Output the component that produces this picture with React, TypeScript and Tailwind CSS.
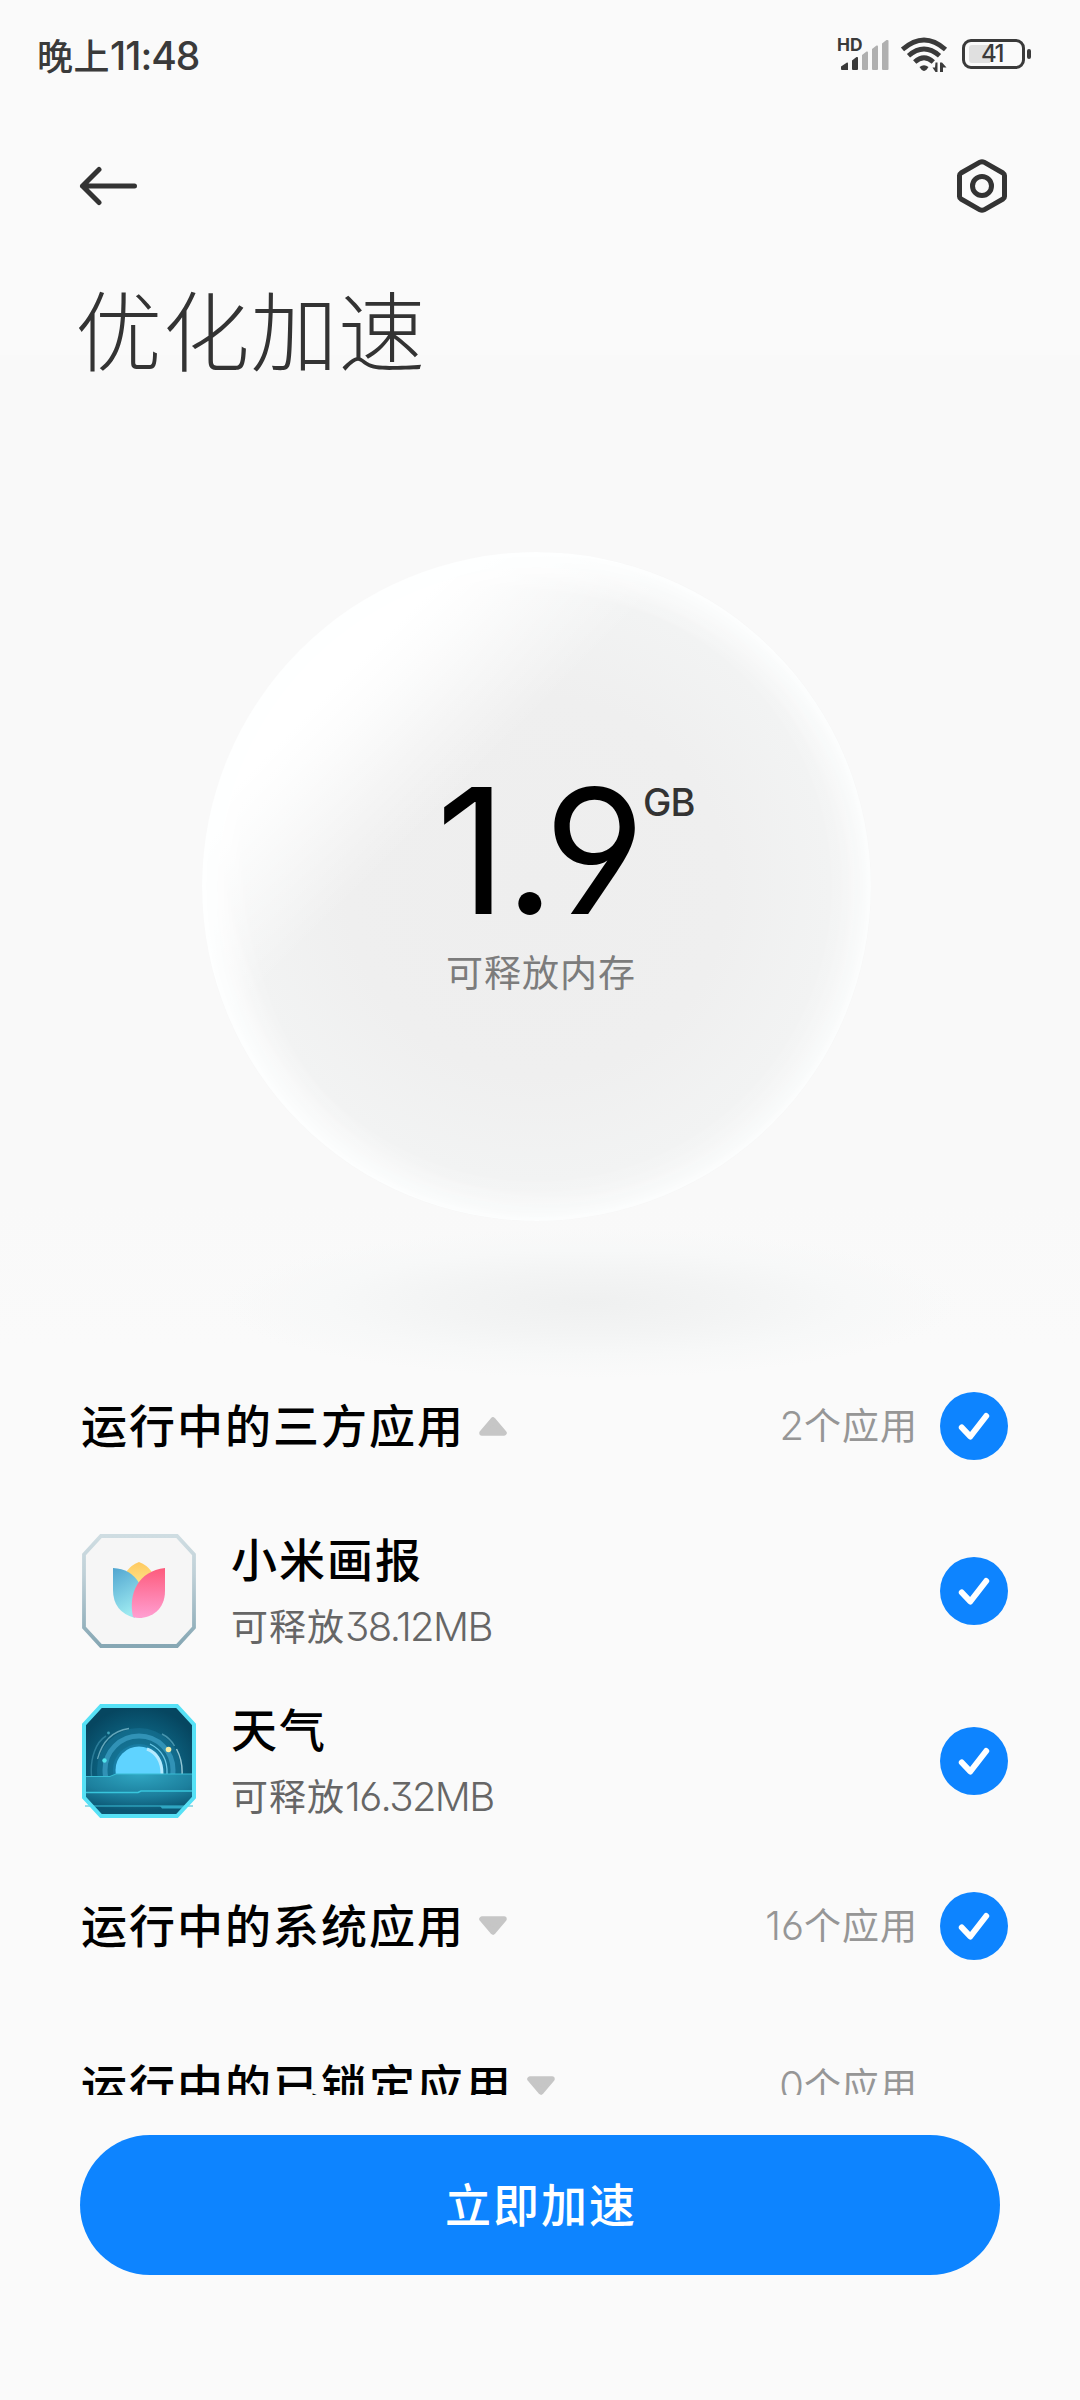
import { useState } from "react";

const fontCls = "font-[Inter,'Noto_Sans_CJK_SC',sans-serif] [font-feature-settings:'cv03','cv04','cv09']";

type RunningApp = { name: string; size: string; icon: "gallery" | "weather" };
type Group = { title: string; count: number; checkable: boolean; apps: RunningApp[] };

const groups: Group[] = [
  {
    title: "运行中的三方应用",
    count: 2,
    checkable: true,
    apps: [
      { name: "小米画报", size: "38.12MB", icon: "gallery" },
      { name: "天气", size: "16.32MB", icon: "weather" },
    ],
  },
  { title: "运行中的系统应用", count: 16, checkable: true, apps: [] },
  { title: "运行中的已锁定应用", count: 0, checkable: false, apps: [] },
];

function SignalIcon() {
  return (
    <svg className="w-[52px] h-9 overflow-visible" viewBox="0 0 52 36">
      <text x="-1" y="14.500" fontSize="17" fontWeight="700" fill="#3a3a3a" fontFamily="Inter, sans-serif" textLength="25.500" lengthAdjust="spacingAndGlyphs">HD</text>
      <path d="M3 30.5L9 26.5Q10 26.200 10 27.500V34H4Q3 34 3 33Z" fill="#3a3a3a" />
      <path d="M14 24.500L18.500 21Q20 20.500 20 22V33Q20 34 19 34H15Q14 34 14 33Z" fill="#3a3a3a" />
      <path d="M24 19L28.500 15.500Q30 15 30 16.500V33Q30 34 29 34H25Q24 34 24 33Z" fill="#b0b0b0" />
      <path d="M34 13L38.500 9.500Q40 9 40 10.500V33Q40 34 39 34H35Q34 34 34 33Z" fill="#b0b0b0" />
      <path d="M44 7.500L48.500 4Q50.500 3.500 50.500 5V33Q50.500 34 49.500 34H45Q44 34 44 33Z" fill="#b0b0b0" />
    </svg>
  );
}

function WifiIcon() {
  return (
    <svg className="w-[47px] h-9" viewBox="0 0 47 36" fill="none" stroke="#3a3a3a" strokeWidth="4.800">
      <path d="M1.500 13.500Q23 -5.500 44.500 13.500" />
      <path d="M7.500 19.700Q23 6.300 38.500 19.700" />
      <path d="M13.700 26Q23 17.500 32.300 26" />
      <path d="M18.500 31Q23 27.300 27.500 31L25.500 33.800Q23 36 20.500 33.800Z" fill="#3a3a3a" stroke="none" />
      <path d="M36.500 26.500V36H34.500L31.500 31.500H34L34.500 26.500ZM39 26.500H41L45.500 31.500H42V36H39Z" fill="#3a3a3a" stroke="none" />
    </svg>
  );
}

function Battery({ level }: { level: number }) {
  return (
    <div className="flex items-center gap-[2px]">
      <div className="relative w-[63px] h-[30px] rounded-[9px] border-[3px] border-[#3a3a3a] p-[3px] pl-1">
        <div className="h-[18px] rounded-l-[3px] bg-[#e0e0e0]" style={{ width: `${level}%` }} />
        <span className="absolute inset-0 flex items-center justify-center pr-[3px] text-[24px] leading-none font-medium tracking-[-1.5px] text-[#3a3a3a]">{level}</span>
      </div>
      <div className="w-1 h-[10px] rounded-[2px] bg-[#3a3a3a]" />
    </div>
  );
}

function StatusBar() {
  return (
    <div className="flex items-center justify-between h-[108px] pl-[37px] pr-[49px]">
      <span className="pt-[2px] text-[36px] leading-none font-medium tracking-[0.5px] text-[#3a3a3a]">
        晚上<span className="text-[39px] tracking-[-1px]">11:48</span>
      </span>
      <div className="flex items-center">
        <SignalIcon />
        <div className="ml-[11px]"><WifiIcon /></div>
        <div className="ml-[14px]"><Battery level={41} /></div>
      </div>
    </div>
  );
}

function GalleryIcon() {
  return (
    <svg className="w-[114px] h-[114px]" viewBox="0 0 114 114">
      <defs>
        <linearGradient id="frame" x1="0" y1="0" x2="0" y2="1">
          <stop offset="0" stopColor="#cfdde2" />
          <stop offset="0.350" stopColor="#bfd0d7" />
          <stop offset="1" stopColor="#86a7b4" />
        </linearGradient>
        <linearGradient id="petalBlue" x1="0" y1="0" x2="0.300" y2="1">
          <stop offset="0" stopColor="#51a5d0" />
          <stop offset="1" stopColor="#9ce9f0" />
        </linearGradient>
        <linearGradient id="petalPink" x1="0" y1="0" x2="0" y2="1">
          <stop offset="0" stopColor="#fd5b7c" />
          <stop offset="1" stopColor="#ff9fd2" />
        </linearGradient>
        <linearGradient id="petalGold" x1="0" y1="0" x2="0" y2="1">
          <stop offset="0" stopColor="#ffc95f" />
          <stop offset="1" stopColor="#fde58c" />
        </linearGradient>
      </defs>
      <path d="M19 2H95L112 20.500V93.500L95 112H19L2 93.500V20.500Z" fill="#f6f6f6" stroke="url(#frame)" strokeWidth="3.800" />
      <path d="M57 28Q65 31 69.500 37.500L57 52L44.500 37.500Q49 31 57 28Z" fill="url(#petalGold)" />
      <path d="M31 34Q49 35 57 49L53 84Q31 78 31 56Z" fill="url(#petalBlue)" />
      <path d="M83 34V57C83 75 70 84 57 84Q54 84 51 83C46 60 56 37 83 34Z" fill="url(#petalPink)" />
    </svg>
  );
}

function WeatherIcon() {
  return (
    <svg className="w-[114px] h-[114px]" viewBox="0 0 114 114">
      <defs>
        <radialGradient id="sky" cx="0.500" cy="0.600" r="0.600">
          <stop offset="0" stopColor="#1287a8" />
          <stop offset="0.550" stopColor="#0c6280" />
          <stop offset="1" stopColor="#064660" />
        </radialGradient>
        <radialGradient id="sea" cx="0.500" cy="0" r="0.900">
          <stop offset="0" stopColor="#2fa6c2" />
          <stop offset="0.600" stopColor="#1c7f9d" />
          <stop offset="1" stopColor="#0b5673" />
        </radialGradient>
        <clipPath id="horizon">
          <rect width="114" height="72" />
        </clipPath>
      </defs>
      <path d="M19 2H95L112 20.500V93.500L95 112H19L2 93.500V20.500Z" fill="url(#sky)" />
      <g clipPath="url(#horizon)" fill="none">
        <circle cx="57" cy="66" r="42" fill="#1a7b9e" opacity="0.450" />
        <circle cx="57" cy="66" r="34" stroke="#3192b6" strokeWidth="5" />
        <circle cx="57" cy="66" r="26" fill="#187da3" />
        <circle cx="57" cy="66" r="23.500" fill="#5fd3ff" />
        <path d="M65 45Q80 51 80 70" stroke="#b5ebff" strokeWidth="3" />
        <path d="M68 40Q86 49 85 70" stroke="#6bc8e7" strokeWidth="1.300" />
        <path d="M9.500 72C8 54 14 38 24 32" stroke="#2b7c98" strokeWidth="1.500" />
        <path d="M15.500 55C20 38 30 27 47 24.500" stroke="#64a6ba" strokeWidth="1.300" />
        <path d="M80 30Q88 34 92.500 42" stroke="#4795ae" strokeWidth="1.500" />
        <path d="M94.500 45Q101 57 100 72" stroke="#91c6d4" strokeWidth="1.500" />
      </g>
      <path d="M3 73H28L34 70H111V93L94.500 111H19.500L3 93Z" fill="url(#sea)" />
      <path d="M3 88.500H56L59 87H111" fill="none" stroke="#38c5dc" strokeWidth="1.500" />
      <path d="M3 72.500H28L34 70H111M3 102H111" fill="none" stroke="#38bcd4" strokeWidth="1.200" />
      <path d="M78 102H102L100 104.500H80Z" fill="#2fa6c2" />
      <circle cx="86.500" cy="45.500" r="2.800" fill="#f5eca4" />
      <circle cx="22.500" cy="56.500" r="2.200" fill="#52e5ec" />
      <circle cx="26.500" cy="29" r="1.400" fill="#3fa2b8" />
      <path d="M19 2H95L112 20.500V93.500L95 112H19L2 93.500V20.500Z" fill="none" stroke="#56e1f6" strokeWidth="4" />
    </svg>
  );
}

function CheckBadge({ checked, onToggle }: { checked: boolean; onToggle: () => void }) {
  return (
    <button type="button" onClick={onToggle} className={`w-[68px] h-[68px] shrink-0 rounded-full ${checked ? "bg-[#0d84ff]" : "bg-[#e6e6e6]"}`}>
      <svg className="w-[68px] h-[68px]" viewBox="0 0 68 68" fill="none" stroke="#fff" strokeWidth="6" strokeLinecap="round" strokeLinejoin="round">
        <path d="M21.800 35.500L30.300 44.500L46.200 24" />
      </svg>
    </button>
  );
}

function Caret({ up }: { up: boolean }) {
  return (
    <svg className={`w-7 h-[19px] ${up ? "" : "-mt-[2px] rotate-180"}`} viewBox="0 0 28 19">
      <path d="M14 3L25 16H3Z" fill="#c6c6c6" stroke="#c6c6c6" strokeWidth="5.500" strokeLinejoin="round" />
    </svg>
  );
}

function GroupRow({ group, open, onOpen }: { group: Group; open: boolean; onOpen: () => void }) {
  const [checked, setChecked] = useState(true);

  return (
    <div className="flex items-center h-[160px] pl-[81px] pr-[72px]">
      <button type="button" onClick={onOpen} className="flex items-center gap-[14px]">
        <span className="text-[46px] leading-[68px] font-medium tracking-[2px] text-black">{group.title}</span>
        <Caret up={open} />
      </button>
      <span className={`ml-auto pt-px text-[37px] leading-[56px] tracking-[1px] text-[#969696] ${group.checkable ? "mr-[22px]" : "mr-[90px]"}`}>
        <span className="text-[40px] font-[350] tracking-[0px]">{group.count}</span>个应用
      </span>
      {group.checkable && <CheckBadge checked={checked} onToggle={() => setChecked(!checked)} />}
    </div>
  );
}

function AppRow({ app }: { app: RunningApp }) {
  const [checked, setChecked] = useState(true);

  return (
    <div className="flex items-center h-[170px] pl-[82px] pr-[72px]">
      {app.icon === "gallery" ? <GalleryIcon /> : <WeatherIcon />}
      <div className="flex-1 ml-[35px] pt-[5px]">
        <div className="text-[46px] leading-[66px] font-medium tracking-[2px] text-black">{app.name}</div>
        <div className="text-[37px] leading-[67px] tracking-[1px] text-[#666]">
          可释放<span className="text-[40px] font-[350] tracking-[-1.6px]">{app.size}</span>
        </div>
      </div>
      <CheckBadge checked={checked} onToggle={() => setChecked(!checked)} />
    </div>
  );
}

function MemoryOrb() {
  return (
    <div className="relative h-[946px] bg-[linear-gradient(#f9f9f9_85%,#fafafa)] pt-[152px]">
      <div className="absolute left-[220px] top-[828px] w-[740px] h-[150px] rounded-[50%] bg-[radial-gradient(closest-side,#eff0f0,#f3f4f4_40%,#f7f8f8_70%,#f9f9f900)]" />
      <div className="relative ml-[202px] w-[669px] h-[669px] rounded-full bg-[linear-gradient(135deg,#ffffff_20%,#ffffffcc_24%,#ffffff00_37%),radial-gradient(circle_at_50%_50%,#eeeeee_0%,#efefef_40%,#f2f3f3_62%,#f8f9f9_80%)] shadow-[inset_0_0_50px_4px_#fdffff,inset_14px_10px_50px_#ffffff,inset_0_0_10px_#ffffff] pt-[209px]">
        <div className="flex ml-[234px] h-[185px]">
          <span className="w-[207px] text-[174px] leading-[180px] font-[430] tracking-[-2px] text-black">1.9</span>
          <span className="mt-[13px] text-[38px] leading-[56px] font-[450] tracking-[-0.8px] text-[#333]">GB</span>
        </div>
        <div className="ml-[244px] text-[37px] leading-[56px] tracking-[1px] text-[#7c7c7c]">可释放内存</div>
      </div>
    </div>
  );
}

export default function App() {
  const [openTitle, setOpenTitle] = useState<string | null>("运行中的三方应用");

  return (
    <div lang="zh-CN" className={`flex flex-col w-[1080px] h-[2400px] overflow-hidden bg-[#fafafa] ${fontCls}`}>
      <div className="h-[400px] shrink-0 bg-[linear-gradient(#fafafa_355px,#f9f9f9_355px)]">
        <StatusBar />
        <div className="flex items-center justify-between h-[156px] pl-[79px] pr-[71px]">
          <svg className="w-[59px] h-10" viewBox="0 0 59 40" fill="none" stroke="#333" strokeWidth="5" strokeLinecap="round" strokeLinejoin="round">
            <path d="M55.500 20H3.500M20 3.500L3.500 20L20 36.500" />
          </svg>
          <svg className="w-[54px] h-[54px]" viewBox="0 0 54 54" fill="none" stroke="#333" strokeWidth="5" strokeLinejoin="round">
            <path d="M27 2.700Q28 2.700 29 3.200L48 14Q49.500 15 49.500 16.500V37.500Q49.500 39 48 40L29 50.800Q27 51.800 25 50.800L6 40Q4.500 39 4.500 37.500V16.500Q4.500 15 6 14L25 3.200Q26 2.700 27 2.700Z" />
            <circle cx="27" cy="27" r="9.500" />
          </svg>
        </div>
        <h1 className="ml-[75px] pt-1 text-[87px] leading-[132px] font-light tracking-[0.7px] text-[#333]">优化加速</h1>
      </div>

      <div className="shrink-0">
        <MemoryOrb />
      </div>

      <div className="h-[749px] shrink-0 overflow-hidden">
        {groups.map((g) => (
          <div key={g.title}>
            <GroupRow group={g} open={openTitle === g.title} onOpen={() => setOpenTitle(openTitle === g.title ? null : g.title)} />
            {openTitle === g.title && g.apps.map((a) => <AppRow key={a.name} app={a} />)}
          </div>
        ))}
      </div>

      <div className="px-20 pt-10">
        <button type="button" className="w-full h-[140px] pl-[2px] rounded-full bg-[#0d84ff] text-white text-[46px] font-medium tracking-[2px]">
          立即加速
        </button>
      </div>
    </div>
  );
}
